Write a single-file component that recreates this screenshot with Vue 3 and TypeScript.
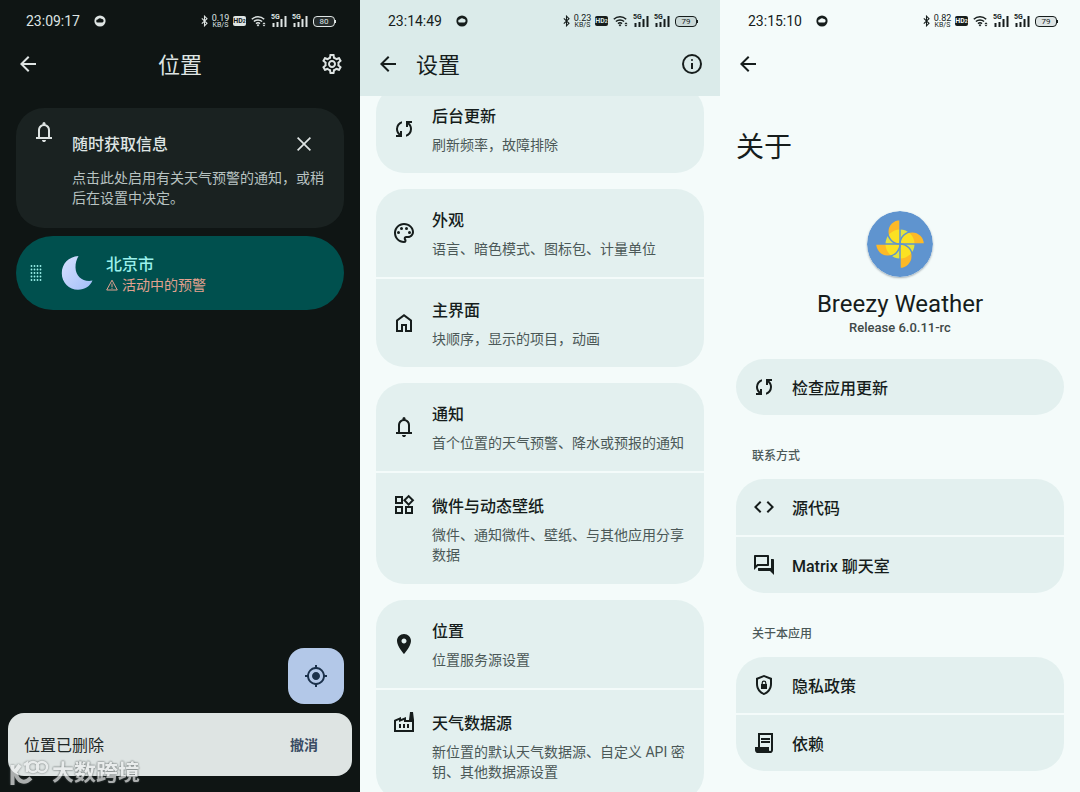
<script setup lang="ts">
interface StatusInfo {
  time: string
  speed: string
  battery: string
}

interface Entry {
  icon: string
  title: string
  detail?: string
  tall?: boolean
}

const icons: Record<string, string> = {
  back: 'm7.825 13 5.6 5.6L12 20l-8-8 8-8 1.425 1.4-5.6 5.6H20v2z',
  settings:
    'M19.43 12.98c.04-.32.07-.64.07-.98 0-.34-.03-.66-.07-.98l2.11-1.65c.19-.15.24-.42.12-.64l-2-3.46c-.09-.16-.26-.25-.44-.25-.06 0-.12.01-.17.03l-2.49 1c-.52-.4-1.08-.73-1.69-.98l-.38-2.65C14.46 2.18 14.25 2 14 2h-4c-.25 0-.46.18-.49.42l-.38 2.65c-.61.25-1.17.59-1.69.98l-2.49-1c-.06-.02-.12-.03-.18-.03-.17 0-.34.09-.43.25l-2 3.46c-.13.22-.07.49.12.64l2.11 1.65c-.04.32-.07.65-.07.98 0 .33.03.66.07.98l-2.11 1.65c-.19.15-.24.42-.12.64l2 3.46c.09.16.26.25.44.25.06 0 .12-.01.17-.03l2.49-1c.52.4 1.08.73 1.69.98l.38 2.65c.03.24.24.42.49.42h4c.25 0 .46-.18.49-.42l.38-2.65c.61-.25 1.17-.59 1.69-.98l2.49 1c.06.02.12.03.18.03.17 0 .34-.09.43-.25l2-3.46c.12-.22.07-.49-.12-.64l-2.11-1.65zm-1.98-1.71c.04.31.05.52.05.73 0 .21-.02.43-.05.73l-.14 1.13.89.7 1.08.84-.7 1.21-1.27-.51-1.04-.42-.9.68c-.43.32-.84.56-1.25.73l-1.06.43-.16 1.13-.2 1.35h-1.4l-.19-1.35-.16-1.13-1.06-.43c-.43-.18-.83-.41-1.23-.71l-.91-.7-1.06.43-1.27.51-.7-1.21 1.08-.84.89-.7-.14-1.13c-.03-.31-.05-.54-.05-.74s.02-.43.05-.73l.14-1.13-.89-.7-1.08-.84.7-1.21 1.27.51 1.04.42.9-.68c.43-.32.84-.56 1.25-.73l1.06-.43.16-1.13.2-1.35h1.39l.19 1.35.16 1.13 1.06.43c.43.18.83.41 1.23.71l.91.7 1.06-.43 1.27-.51.7 1.21-1.07.85-.89.7.14 1.13zM12 8c-2.21 0-4 1.79-4 4s1.79 4 4 4 4-1.79 4-4-1.79-4-4-4zm0 6c-1.1 0-2-.9-2-2s.9-2 2-2 2 .9 2 2-.9 2-2 2z',
  info: 'M11 17h2v-6h-2zM12 9a1 1 0 1 0 0-2 1 1 0 0 0 0 2zM12 2a10 10 0 1 0 0 20 10 10 0 0 0 0-20zm0 2a8 8 0 1 1 0 16 8 8 0 0 1 0-16z',
  close: 'M19 6.2 17.8 5 12 10.800 6.200 5 5 6.200 10.800 12 5 17.800 6.200 19 12 13.200 17.800 19 19 17.800 13.200 12z',
  bell: 'M4 19v-2h2v-7q0-2.075 1.25-3.687T10.5 4.2v-.7q0-.625.438-1.062T12 2t1.063.438T13.5 3.5v.7q2 .5 3.25 2.113T18 10v7h2v2zm8 3q-.825 0-1.412-.587T10 20h4q0 .825-.587 1.413T12 22m-4-5h8v-7q0-1.65-1.175-2.825T12 6T9.175 7.175T8 10z',
  locate:
    'M12 8c-2.21 0-4 1.79-4 4s1.79 4 4 4 4-1.79 4-4-1.79-4-4-4zm8.94 3A8.994 8.994 0 0 0 13 3.06V1h-2v2.06A8.994 8.994 0 0 0 3.06 11H1v2h2.06A8.994 8.994 0 0 0 11 20.94V23h2v-2.06A8.994 8.994 0 0 0 20.94 13H23v-2h-2.06zM12 19c-3.87 0-7-3.13-7-7s3.13-7 7-7 7 3.13 7 7-3.13 7-7 7z',
  sync: 'M4 20v-2h2.75l-.4-.35q-1.225-1.225-1.787-2.662T4 12.05q0-2.775 1.663-4.937T10 4.25v2.1Q8.2 7 7.1 8.563T6 12.05q0 1.125.425 2.188T7.75 16.2l.25.25V14h2v6zm10-.25v-2.1q1.8-.65 2.9-2.212T18 11.95q0-1.125-.425-2.187T16.25 7.8L16 7.55V10h-2V4h6v2h-2.75l.4.35q1.225 1.225 1.788 2.663T20 11.95q0 2.775-1.662 4.938T14 19.75',
  palette:
    'M12 22C6.49 22 2 17.51 2 12S6.49 2 12 2s10 4.04 10 9c0 3.31-2.69 6-6 6h-1.77c-.28 0-.5.22-.5.5 0 .12.05.23.13.33.41.47.64 1.06.64 1.67A2.5 2.5 0 0 1 12 22zm0-18c-4.41 0-8 3.59-8 8s3.59 8 8 8c.28 0 .5-.22.5-.5a.54.54 0 0 0-.14-.35c-.41-.46-.63-1.05-.63-1.65a2.5 2.5 0 0 1 2.5-2.5H16c2.21 0 4-1.79 4-4 0-3.86-3.59-7-8-7zM5 11.5a1.5 1.5 0 1 0 3 0 1.5 1.5 0 0 0-3 0zM8 7.5a1.5 1.5 0 1 0 3 0 1.5 1.5 0 0 0-3 0zM13 7.5a1.5 1.5 0 1 0 3 0 1.5 1.5 0 0 0-3 0zM16 11.5a1.5 1.5 0 1 0 3 0 1.5 1.5 0 0 0-3 0z',
  home: 'M6 19h3v-6h6v6h3v-9l-6-4.5L6 10zm-2 2V9l8-6l8 6v12h-7v-6h-2v6z',
  widgets:
    'M16.66 4.52l2.83 2.83-2.83 2.83-2.83-2.83 2.83-2.83M9 5v4H5V5h4m10 10v4h-4v-4h4M9 15v4H5v-4h4m7.66-13.31L11 7.34 16.66 13l5.66-5.66-5.66-5.65zM11 3H3v8h8V3zm10 10h-8v8h8v-8zm-10 0H3v8h8v-8z',
  place:
    'M12 2C8.13 2 5 5.13 5 9c0 5.25 7 13 7 13s7-7.75 7-13c0-3.87-3.13-7-7-7zm0 9.5c-1.38 0-2.5-1.12-2.5-2.5s1.12-2.5 2.5-2.5 2.5 1.12 2.5 2.5-1.12 2.5-2.5 2.5z',
  factory:
    'M22 22H2V10l7-3v2l5-2v3h3l1-8h3l1 8v12zM12 9.95l-5 2V10l-3 1.32V20h16v-8h-8V9.95zM11 18h2v-4h-2v4zm-4 0h2v-4H7v4zm10-4h-2v4h2v-4z',
  code: 'M8 18 2 12l6-6 1.4 1.4L4.8 12l4.6 4.6zm8 0-1.4-1.4 4.6-4.6-4.6-4.6L16 6l6 6z',
  forum:
    'M15 4v7H5.17L4 12.17V4h11m1-2H3c-.55 0-1 .45-1 1v14l4-4h10c.55 0 1-.45 1-1V3c0-.55-.45-1-1-1zm5 4h-2v9H6v2c0 .55.45 1 1 1h11l4 4V7c0-.55-.45-1-1-1z',
  shield:
    'M12 2 4 5v6.1c0 5.05 3.4 9.75 8 10.9 4.6-1.15 8-5.85 8-10.9V5l-8-3zm0 2.1 6 2.3v4.7c0 4-2.5 7.7-6 8.8-3.5-1.1-6-4.8-6-8.8V6.4zM9 16h6v-5h-.6v-1a2.4 2.4 0 0 0-4.8 0v1H9zm1.8-5v-1a1.2 1.2 0 0 1 2.4 0v1z',
  contract:
    'M6 22q-1.25 0-2.125-.875T3 19v-3h3V2h15v17q0 1.25-.875 2.125T18 22zm12-2q.425 0 .713-.288T19 19V4H8v12h9v3q0 .425.288.713T18 20M9 9V7h9v2zm0 3v-2h9v2z',
}

const statuses: StatusInfo[] = [
  { time: '23:09:17', speed: '0.19', battery: '80' },
  { time: '23:14:49', speed: '0.23', battery: '79' },
  { time: '23:15:10', speed: '0.82', battery: '79' },
]

const settingGroups: Entry[][] = [
  [{ icon: 'sync', title: '后台更新', detail: '刷新频率，故障排除' }],
  [
    { icon: 'palette', title: '外观', detail: '语言、暗色模式、图标包、计量单位' },
    { icon: 'home', title: '主界面', detail: '块顺序，显示的项目，动画' },
  ],
  [
    { icon: 'bell', title: '通知', detail: '首个位置的天气预警、降水或预报的通知' },
    { icon: 'widgets', title: '微件与动态壁纸', detail: '微件、通知微件、壁纸、与其他应用分享数据', tall: true },
  ],
  [
    { icon: 'place', title: '位置', detail: '位置服务源设置' },
    { icon: 'factory', title: '天气数据源', detail: '新位置的默认天气数据源、自定义 API 密钥、其他数据源设置', tall: true },
  ],
]

const aboutSections: { label?: string; items: Entry[] }[] = [
  { items: [{ icon: 'sync', title: '检查应用更新' }] },
  {
    label: '联系方式',
    items: [
      { icon: 'code', title: '源代码' },
      { icon: 'forum', title: 'Matrix 聊天室' },
    ],
  },
  {
    label: '关于本应用',
    items: [
      { icon: 'shield', title: '隐私政策' },
      { icon: 'contract', title: '依赖' },
    ],
  },
]
</script>

<template>
  <main class="board">
    <section v-for="(status, index) in statuses" :key="status.time" class="phone" :class="`phone-${index + 1}`">
      <div class="top">
        <div class="status">
          <span class="time">{{ status.time }}</span>
          <svg class="notice" viewBox="0 0 12 12" aria-hidden="true">
            <circle cx="6" cy="6" r="5.6" fill="currentColor" />
            <path class="notice-cut" d="M3.6 7.6a1.5 1.5 0 0 1 .2-3 2.300 2.300 0 0 1 4-.5 1.800 1.800 0 0 1 .6 3.500z" />
          </svg>
          <div class="signals">
            <svg width="7" height="12" viewBox="0 0 7 12" aria-hidden="true">
              <path d="M.8 3.300 6 8.300 3.500 10.800V1.200L6 3.700.8 8.700" fill="none" stroke="currentColor" stroke-width="1.100" />
            </svg>
            <span class="speed"><b>{{ status.speed }}</b><b class="unit">KB/S</b></span>
            <span class="hd">HD<i>2</i></span>
            <svg width="15" height="12" viewBox="0 0 15 12" fill="none" stroke="currentColor" stroke-width="1.500" aria-hidden="true">
              <path d="M.8 4.200a9 9 0 0 1 12.400 0M2.900 6.500a6 6 0 0 1 8.200 0M5 8.600a3 3 0 0 1 4 0" />
              <path d="M7 9l1.300 1.300L7 11.600l-1.300-1.300z" fill="currentColor" stroke="none" />
              <path d="M11.500 8.900 13 7.200l1.500 1.700zM11.500 9.800 13 11.500l1.500-1.700z" fill="currentColor" stroke="none" />
            </svg>
            <span v-for="n in 2" :key="n" class="cell">
              <b>5G</b>
              <svg width="16" height="12" viewBox="0 0 16 12" fill="currentColor" aria-hidden="true">
                <path d="M1.500 8h2v4h-2zM5.500 7h2v5h-2zM9.500 4h2v8h-2zM13.500 1h2v11h-2z" />
              </svg>
            </span>
            <span class="battery">{{ status.battery }}</span>
          </div>
        </div>
        <header class="appbar">
          <button class="icon-button" type="button" aria-label="返回">
            <svg class="icon" viewBox="0 0 24 24"><path :d="icons.back" /></svg>
          </button>
          <h1 v-if="index === 0" class="bar-title centered">位置</h1>
          <h1 v-if="index === 1" class="bar-title">设置</h1>
          <button v-if="index === 0" class="icon-button" type="button" aria-label="设置">
            <svg class="icon" viewBox="0 0 24 24"><path :d="icons.settings" /></svg>
          </button>
          <button v-if="index === 1" class="icon-button" type="button" aria-label="关于">
            <svg class="icon" viewBox="0 0 24 24"><path :d="icons.info" /></svg>
          </button>
        </header>
      </div>

      <div v-if="index === 0" class="places">
        <article class="tip">
          <svg class="icon" viewBox="0 0 24 24" aria-hidden="true"><path :d="icons.bell" /></svg>
          <div class="tip-body">
            <div class="tip-head">
              <h2 class="title">随时获取信息</h2>
              <button class="icon-button" type="button" aria-label="关闭">
                <svg class="icon" viewBox="0 0 24 24"><path :d="icons.close" /></svg>
              </button>
            </div>
            <p class="detail">点击此处启用有关天气预警的通知，或稍后在设置中决定。</p>
          </div>
        </article>

        <button class="city" type="button">
          <svg class="grip" viewBox="0 0 12 16" aria-hidden="true">
            <template v-for="row in 5" :key="row">
              <circle v-for="col in 4" :key="col" :cx="col * 3 - 1.5" :cy="row * 3.5 - 2.5" r="0.9" fill="currentColor" />
            </template>
          </svg>
          <svg class="moon" viewBox="0 0 32 36" aria-hidden="true">
            <defs>
              <linearGradient id="moonlight" x1="0" y1="0" x2="1" y2="1">
                <stop offset="0" stop-color="#d8e1ff" />
                <stop offset="1" stop-color="#a2bef8" />
              </linearGradient>
            </defs>
            <path d="M17.500 1C7.500 1.600.8 9 .8 18.200.8 27.500 8 34.800 17 34.800c6.800 0 12.200-3.500 14.500-9.200C22 27.300 14.800 21.800 14.500 12.500c-.1-4.600 1.200-8.300 3-11.500z" fill="url(#moonlight)" />
          </svg>
          <span class="city-text">
            <span class="title">北京市</span>
            <span class="warning">
              <svg width="12" height="12" viewBox="0 0 12 12" fill="none" stroke="currentColor" aria-hidden="true">
                <path d="M6 1.200 11.300 11H.7zM6 4.500v3.500M6 8.700v1.100" />
              </svg>
              活动中的预警
            </span>
          </span>
        </button>

        <div class="bottom">
          <button class="fab" type="button" aria-label="当前位置">
            <svg class="icon" viewBox="0 0 24 24"><path :d="icons.locate" /></svg>
          </button>
          <div class="snackbar" role="status">
            <span class="message">位置已删除</span>
            <button type="button" class="undo">撤消</button>
          </div>
        </div>

        <div class="watermark">
          <svg width="40" height="28" viewBox="0 0 40 28" fill="none" stroke="currentColor" aria-hidden="true">
            <path d="M2.500 6v20M3 15.500 10 6M6 14c1 8 8 12 15 5" stroke-width="4" />
            <path d="M14 6l3-2v9" stroke-width="2.500" />
            <circle cx="23" cy="8" r="5" stroke-width="2.500" />
            <circle cx="32" cy="8" r="5" stroke-width="2.500" />
          </svg>
          <span>大数跨境</span>
        </div>
      </div>

      <div v-if="index === 1" class="scroll">
        <nav class="settings">
          <div v-for="(group, g) in settingGroups" :key="g" class="group">
            <button v-for="item in group" :key="item.title" type="button" class="row" :class="{ tall: item.tall }">
              <svg class="icon" viewBox="0 0 24 24" aria-hidden="true"><path :d="icons[item.icon]" /></svg>
              <span class="row-text">
                <span class="title">{{ item.title }}</span>
                <span class="detail">{{ item.detail }}</span>
              </span>
            </button>
          </div>
        </nav>
      </div>

      <div v-if="index === 2" class="about">
        <h1 class="page-title">关于</h1>
        <div class="brand">
          <svg class="logo" viewBox="0 0 66 66" aria-hidden="true">
            <defs>
              <clipPath id="hub"><circle cx="33" cy="33" r="14.500" /></clipPath>
              <path id="blade" d="M33 33V8.500a12.250 12.250 0 0 0 0 24.500z" />
            </defs>
            <circle cx="33" cy="33" r="33" fill="#5f94cf" />
            <circle cx="33" cy="33" r="14.500" fill="#e3e33e" />
            <g v-for="turn in 4" :key="turn" :transform="`rotate(${turn * 90} 33 33)`">
              <use href="#blade" fill="#fdb927" />
            </g>
            <g clip-path="url(#hub)">
              <g v-for="turn in 4" :key="turn" :transform="`rotate(${turn * 90} 33 33)`">
                <use href="#blade" fill="#fbe122" />
              </g>
            </g>
            <g v-for="turn in 4" :key="turn" :transform="`rotate(${turn * 90} 33 33)`">
              <use href="#blade" fill="none" stroke="#5f94cf" stroke-width="1.500" />
            </g>
          </svg>
          <p class="app-name">Breezy Weather</p>
          <p class="version">Release 6.0.11-rc</p>
        </div>
        <section v-for="section in aboutSections" :key="section.items[0].title">
          <h2 v-if="section.label" class="label">{{ section.label }}</h2>
          <div class="group">
            <button v-for="item in section.items" :key="item.title" type="button" class="row single">
              <svg class="icon" viewBox="0 0 24 24" aria-hidden="true"><path :d="icons[item.icon]" /></svg>
              <span class="title">{{ item.title }}</span>
            </button>
          </div>
        </section>
      </div>
    </section>
  </main>
</template>

<style>
body {
  margin: 0;
}
</style>

<style scoped>
* {
  box-sizing: border-box;
}
h1,
h2,
p {
  margin: 0;
  font-weight: 400;
}
button {
  font: inherit;
  color: inherit;
  border: 0;
  padding: 0;
  margin: 0;
  background: none;
  text-align: left;
  cursor: pointer;
}
.board {
  display: grid;
  grid-template-columns: repeat(3, minmax(0, 1fr));
  height: 100vh;
  overflow: hidden;
  font-family: Roboto, 'Noto Sans CJK SC', sans-serif;
  font-size: 14px;
  line-height: 20px;
}
.phone {
  --bg: #f4fbfa;
  --detail: #4b5857;
  display: flex;
  flex-direction: column;
  min-height: 0;
  overflow: hidden;
  background: var(--bg);
  color: #161d1c;
}
.phone-1 {
  --bg: #0f1514;
  --detail: #b8c3c1;
  color: #dee4e3;
}
.phone-2 .top {
  --bg: #dbebea;
  background: var(--bg);
}
.top {
  flex: none;
}
.status {
  display: flex;
  align-items: center;
  height: 32px;
  padding: 10px 23px 0 28px;
}
.phone-1 .status {
  padding: 10px 25px 0 26px;
}
.time {
  font-size: 14px;
}
.notice {
  width: 12px;
  height: 12px;
  margin-left: 14px;
}
.notice-cut {
  fill: var(--bg);
}
.signals {
  display: flex;
  align-items: center;
  gap: 5px;
  margin-left: auto;
}
.speed {
  display: flex;
  flex-direction: column;
  align-items: center;
  width: 15px;
  font-size: 9px;
  line-height: 7px;
}
.speed b {
  font-weight: 400;
}
.speed .unit {
  font-size: 7px;
  line-height: 6px;
}
.hd {
  width: 13px;
  height: 10px;
  border-radius: 2px;
  background: currentColor;
  font-size: 7px;
  line-height: 10px;
  font-weight: 700;
  text-align: center;
  -webkit-text-fill-color: var(--bg);
  white-space: nowrap;
}
.hd i {
  font-size: 5px;
  font-style: normal;
}
.cell {
  position: relative;
  display: flex;
}
.cell b {
  position: absolute;
  top: -1px;
  left: 0;
  font-size: 7px;
  line-height: 7px;
}
.battery {
  position: relative;
  width: 22px;
  height: 11px;
  border: 1px solid currentColor;
  border-radius: 4px;
  font-size: 8px;
  line-height: 9px;
  text-align: center;
  background: rgba(128, 140, 140, 0.2);
}
.battery::after {
  content: '';
  position: absolute;
  top: 3px;
  right: -2px;
  width: 1px;
  height: 3px;
  background: currentColor;
}
.appbar {
  display: flex;
  align-items: center;
  height: 64px;
  padding: 0 4px;
}
.icon-button {
  display: grid;
  place-items: center;
  flex: none;
  width: 48px;
  height: 48px;
}
.icon {
  display: block;
  flex: none;
  width: 24px;
  height: 24px;
  fill: currentColor;
  fill-rule: evenodd;
}
.bar-title {
  flex: 1;
  padding: 4px 0 0 4px;
  font-size: 22px;
  line-height: 28px;
}
.bar-title.centered {
  padding-left: 0;
  text-align: center;
}
.title {
  font-size: 16px;
  line-height: 24px;
  font-weight: 500;
}
.detail {
  color: var(--detail);
}

.places {
  position: relative;
  display: flex;
  flex: 1;
  flex-direction: column;
  gap: 8px;
  padding: 12px 16px 16px;
}
.tip {
  display: flex;
  gap: 16px;
  padding: 12px 16px 20px;
  border-radius: 28px;
  background: #1a2221;
}
.tip-body {
  flex: 1;
}
.tip-head {
  display: flex;
  align-items: center;
  justify-content: space-between;
}
.tip-head .title {
  padding-top: 2px;
}
.city {
  display: flex;
  align-items: center;
  min-height: 74px;
  padding: 0 14px;
  border-radius: 37px;
  background: #00504e;
  color: #9cf1ec;
}
.grip {
  width: 12px;
  height: 16px;
}
.moon {
  width: 32px;
  height: 36px;
  margin: 0 13px 0 19px;
}
.city-text {
  display: flex;
  flex-direction: column;
}
.warning {
  display: flex;
  align-items: center;
  gap: 4px;
  line-height: 16px;
  color: #e2a18f;
}
.bottom {
  display: flex;
  flex-direction: column;
  gap: 9px;
  margin: auto -8px 0;
}
.fab {
  display: grid;
  place-items: center;
  align-self: flex-end;
  width: 56px;
  height: 56px;
  margin-right: 8px;
  border-radius: 16px;
  background: #b3c8e8;
  color: #1b314b;
}
.snackbar {
  display: flex;
  align-items: center;
  justify-content: space-between;
  min-height: 63px;
  padding: 0 34px 0 16px;
  border-radius: 16px;
  background: #dee4e3;
  color: #1f2726;
  font-size: 16px;
}
.message {
  padding-top: 2px;
}
.undo {
  font-size: 14px;
  font-weight: 700;
  color: #394b63;
}
.watermark {
  position: absolute;
  left: 10px;
  bottom: 4px;
  display: flex;
  align-items: center;
  gap: 2px;
  font-size: 22px;
  line-height: 30px;
  font-weight: 700;
  color: #eef0f0;
  text-shadow: 0 0 2px #4a5252, 0 0 2px #4a5252;
  opacity: 0.7;
  pointer-events: none;
}
.watermark svg {
  filter: drop-shadow(0 0 1px #4a5252);
}

.scroll {
  flex: 1;
  min-height: 0;
  overflow: hidden;
}
.settings {
  display: flex;
  flex-direction: column;
  gap: 16px;
  margin-top: -11px;
  padding: 0 16px 16px;
}
.group {
  display: flex;
  flex-direction: column;
  gap: 2px;
  border-radius: 28px;
  overflow: hidden;
}
.row {
  display: flex;
  align-items: center;
  gap: 16px;
  width: 100%;
  min-height: 88px;
  padding: 0 16px;
  background: #e3f0ef;
}
.row-text {
  display: flex;
  flex: 1;
  flex-direction: column;
  gap: 6px;
  padding-top: 2px;
}
.row.tall {
  align-items: flex-start;
  padding: 20px 16px 19px;
}
.row.single {
  min-height: 56px;
}
.row.single .title {
  padding-top: 4px;
}

.about {
  padding: 34px 16px 0;
}
.page-title {
  font-size: 28px;
  line-height: 36px;
}
.brand {
  display: flex;
  flex-direction: column;
  align-items: center;
  padding: 45px 0 23px;
}
.logo {
  width: 66px;
  height: 66px;
  border-radius: 50%;
  box-shadow: 0 1px 2px rgba(40, 60, 80, 0.4);
}
.app-name {
  margin-top: 11px;
  font-size: 24px;
  line-height: 32px;
}
.version {
  font-size: 13px;
  line-height: 16px;
  font-weight: 500;
  color: #3f4948;
}
.label {
  padding: 31px 16px 13px;
  font-size: 12px;
  line-height: 20px;
  font-weight: 500;
  color: var(--detail);
}
</style>
